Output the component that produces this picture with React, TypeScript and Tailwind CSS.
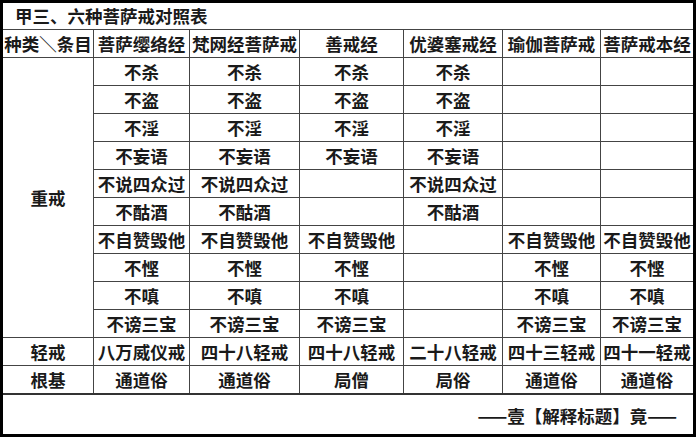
const cols = "grid-cols-[90px_95px_109px_103px_98px_97px_92px]";

const headers = ["种类＼条目", "菩萨缨络经", "梵网经菩萨戒", "善戒经", "优婆塞戒经", "瑜伽菩萨戒", "菩萨戒本经"];

// each row: 6 sutra columns, "" = empty cell
const heavyRules: string[][] = [
  ["不杀", "不杀", "不杀", "不杀", "", ""],
  ["不盗", "不盗", "不盗", "不盗", "", ""],
  ["不淫", "不淫", "不淫", "不淫", "", ""],
  ["不妄语", "不妄语", "不妄语", "不妄语", "", ""],
  ["不说四众过", "不说四众过", "", "不说四众过", "", ""],
  ["不酤酒", "不酤酒", "", "不酤酒", "", ""],
  ["不自赞毁他", "不自赞毁他", "不自赞毁他", "", "不自赞毁他", "不自赞毁他"],
  ["不悭", "不悭", "不悭", "", "不悭", "不悭"],
  ["不嗔", "不嗔", "不嗔", "", "不嗔", "不嗔"],
  ["不谤三宝", "不谤三宝", "不谤三宝", "", "不谤三宝", "不谤三宝"],
];

const lightRules = ["八万威仪戒", "四十八轻戒", "四十八轻戒", "二十八轻戒", "四十三轻戒", "四十一轻戒"];
const basis = ["通道俗", "通道俗", "局僧", "局俗", "通道俗", "通道俗"];

const Cell = ({ children, className = "" }: { children?: string; className?: string }) => (
  <div className={`bg-white flex items-center justify-center whitespace-nowrap ${className}`}>{children}</div>
);

export default function App() {
  return (
    <div
      className="w-[696px] h-[437px] bg-white border-[3px] border-black flex flex-col text-[17.5px] font-bold text-[#1a1a1a] leading-none"
      style={{ fontFamily: '"Noto Sans CJK SC", "Noto Sans", sans-serif' }}
    >
      <div className="h-[27px] flex items-center pl-[12px] border-b border-[#444]">甲三、六种菩萨戒对照表</div>

      <div className={`grid ${cols} grid-rows-[repeat(13,27px)] gap-px bg-[#444] border-b-2 border-[#333]`}>
        {headers.map((h) => (
          <Cell key={h}>{h}</Cell>
        ))}

        <Cell className="row-span-10">重戒</Cell>
        {heavyRules.map((row, i) => row.map((t, j) => <Cell key={`${i}-${j}`}>{t}</Cell>))}

        <Cell>轻戒</Cell>
        {lightRules.map((t, j) => (
          <Cell key={`l${j}`}>{t}</Cell>
        ))}

        <Cell>根基</Cell>
        {basis.map((t, j) => (
          <Cell key={`b${j}`}>{t}</Cell>
        ))}
      </div>

      <div className="flex-1 flex items-center justify-end pr-[16px] pt-[3px]">——壹【解释标题】竟——</div>
    </div>
  );
}
